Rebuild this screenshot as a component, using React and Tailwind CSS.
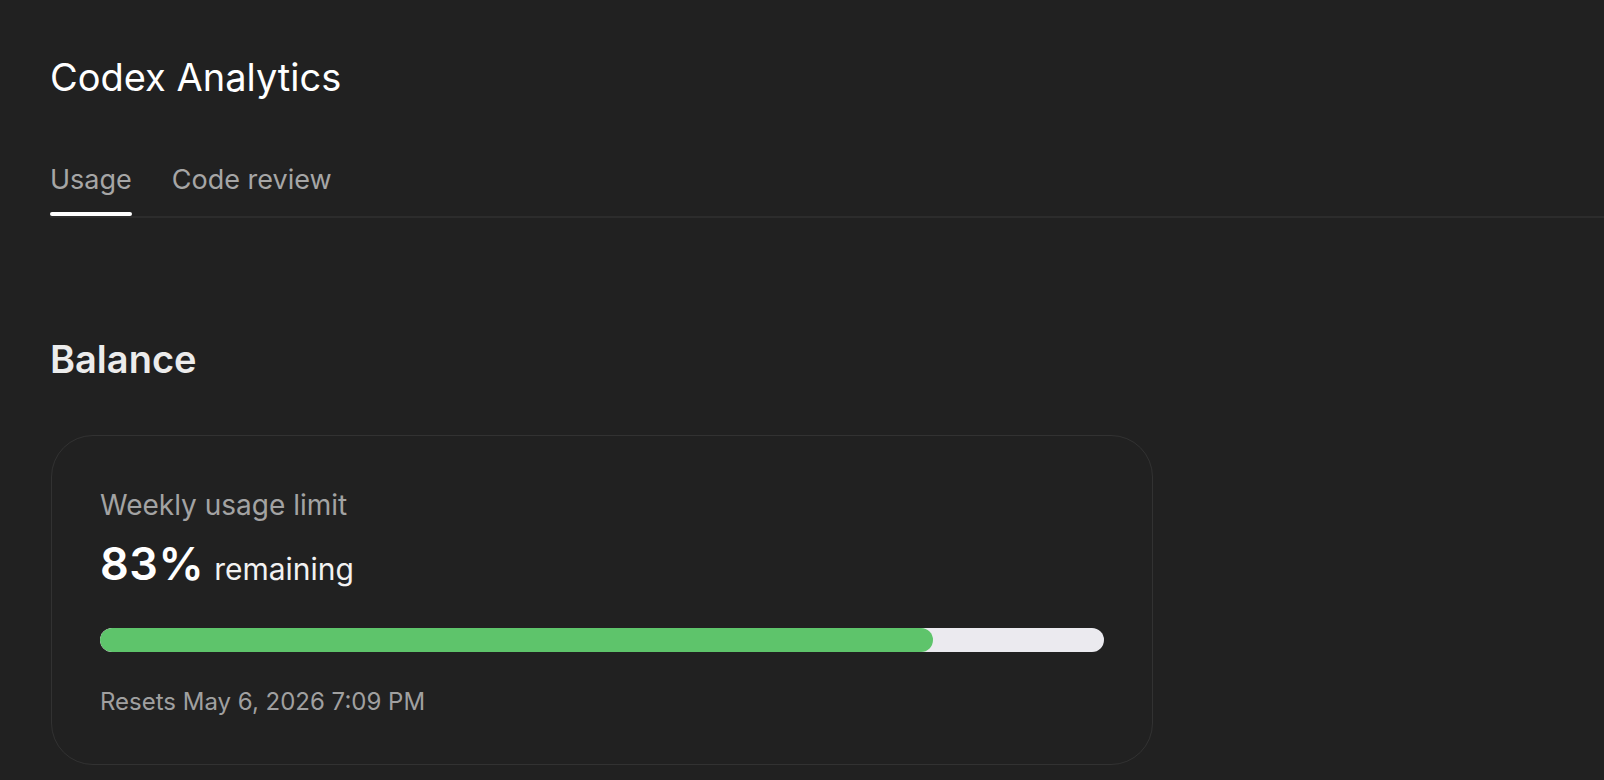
export default function App() {
  const pct = 83;
  return (
    <div
      className="min-h-[780px] w-full bg-[#212121] pl-[50px] pt-[53px] text-white"
      style={{ fontFamily: 'Inter, "Noto Sans", sans-serif' }}
    >
      <h1 className="text-[38px] leading-[48px] font-normal text-white">Codex Analytics</h1>

      <div className="mt-[62px] flex gap-[40px] border-b-2 border-[#2c2c2c]">
        <div className="flex flex-col">
          <span className="text-[27px] leading-[34px] text-[#a6a6a6]">Usage</span>
          <div className="mt-[15px] h-[4px] rounded-full bg-white" />
        </div>
        <div className="flex flex-col">
          <span className="text-[27px] leading-[34px] text-[#a6a6a6]">Code review</span>
          <div className="mt-[15px] h-[4px] rounded-full bg-transparent" />
        </div>
      </div>

      <h2 className="mt-[117px] text-[38px] leading-[48px] font-semibold text-[#ececec]">Balance</h2>

      <div className="ml-px mt-[52px] w-[1102px] rounded-[42px] border border-[#323232] px-[48px] pt-[53px] pb-[47px]">
        <div className="text-[28px] leading-[32px] text-[#a3a3a3]">Weekly usage limit</div>
        <div className="mt-[20px] flex items-baseline gap-[10px] leading-[46px]">
          <span className="text-[45px] font-semibold tracking-[0.5px] text-white">{pct}%</span>
          <span className="text-[30px] text-[#f2f2f2]">remaining</span>
        </div>
        <div className="mt-[36px] h-[24px] w-full overflow-hidden rounded-full bg-[#ebeaef]">
          <div className="h-full rounded-full bg-[#5ec46b]" style={{ width: `${pct}%` }} />
        </div>
        <div className="mt-[35px] text-[24px] leading-[30px] text-[#a0a0a0]">Resets May 6, 2026 7:09 PM</div>
      </div>
    </div>
  );
}
